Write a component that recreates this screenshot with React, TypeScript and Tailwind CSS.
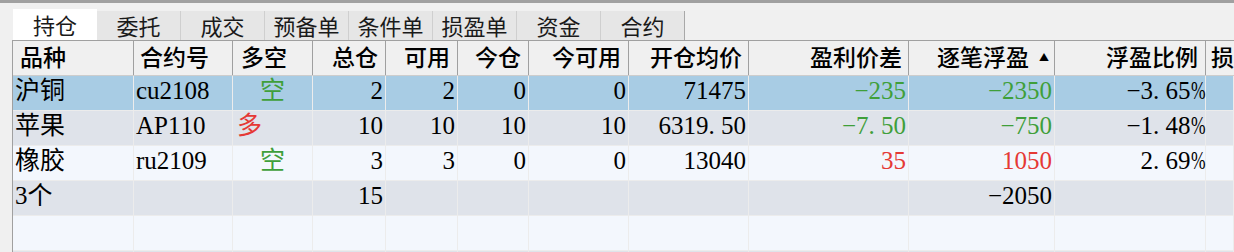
type Cell = { text?: string; color?: string; align?: 'left' | 'right' | 'center' }

const headers: { label: string; align: 'left' | 'right'; pad: string; sort?: boolean }[] = [
    { label: '品种', align: 'left', pad: 'pl-[7px]' },
    { label: '合约号', align: 'left', pad: 'pl-[6px]' },
    { label: '多空', align: 'left', pad: 'pl-[8px]' },
    { label: '总仓', align: 'right', pad: 'pr-[7px]' },
    { label: '可用', align: 'right', pad: 'pr-[7px]' },
    { label: '今仓', align: 'right', pad: 'pr-[7px]' },
    { label: '今可用', align: 'right', pad: 'pr-[7px]' },
    { label: '开仓均价', align: 'right', pad: 'pr-[6px]' },
    { label: '盈利价差', align: 'right', pad: 'pr-[6px]' },
    { label: '逐笔浮盈', align: 'right', pad: 'pr-[5px]', sort: true },
    { label: '浮盈比例', align: 'right', pad: 'pr-[7px]' },
    { label: '损', align: 'left', pad: 'pl-[5px]' },
]

const GREEN = 'text-[#3f9f3a]'
const RED = 'text-[#e53935]'

const empty = (): Cell[] => Array.from({ length: 12 }, () => ({}))

const rows: { bg: string; cells: Cell[] }[] = [
    {
        bg: 'bg-[#a8cce4]',
        cells: [
            { text: '沪铜' },
            { text: 'cu2108' },
            { text: '空', color: GREEN, align: 'center' },
            { text: '2', align: 'right' },
            { text: '2', align: 'right' },
            { text: '0', align: 'right' },
            { text: '0', align: 'right' },
            { text: '71475', align: 'right' },
            { text: '−235', align: 'right', color: GREEN },
            { text: '−2350', align: 'right', color: GREEN },
            { text: '−3.65%', align: 'right' },
            {},
        ],
    },
    {
        bg: 'bg-[#dfe3ea]',
        cells: [
            { text: '苹果' },
            { text: 'AP110' },
            { text: '多', color: RED },
            { text: '10', align: 'right' },
            { text: '10', align: 'right' },
            { text: '10', align: 'right' },
            { text: '10', align: 'right' },
            { text: '6319.50', align: 'right' },
            { text: '−7.50', align: 'right', color: GREEN },
            { text: '−750', align: 'right', color: GREEN },
            { text: '−1.48%', align: 'right' },
            {},
        ],
    },
    {
        bg: 'bg-[#f3f7fd]',
        cells: [
            { text: '橡胶' },
            { text: 'ru2109' },
            { text: '空', color: GREEN, align: 'center' },
            { text: '3', align: 'right' },
            { text: '3', align: 'right' },
            { text: '0', align: 'right' },
            { text: '0', align: 'right' },
            { text: '13040', align: 'right' },
            { text: '35', align: 'right', color: RED },
            { text: '1050', align: 'right', color: RED },
            { text: '2.69%', align: 'right' },
            {},
        ],
    },
    {
        bg: 'bg-[#dfe3ea]',
        cells: [
            { text: '3个' },
            {},
            {},
            { text: '15', align: 'right' },
            {},
            {},
            {},
            {},
            {},
            { text: '−2050', align: 'right' },
            {},
            {},
        ],
    },
    { bg: 'bg-[#f3f7fd]', cells: empty() },
    { bg: 'bg-[#dfe3ea]', cells: empty() },
]

const tabs = ['持仓', '委托', '成交', '预备单', '条件单', '损盈单', '资金', '合约']

const gridCols = 'grid grid-cols-[121px_99px_80px_73px_72px_71px_100px_120px_160px_146px_151px_1fr]'

// SimSun style: '.' and '%' take a half-width cell like the digits
const Num = ({ text }: { text: string }) => (
    <>
        {text.split('').map((ch, i) => {
            if (ch === '.') return <span key={i} className="inline-block w-[0.5em]">.</span>
            if (ch === '%')
                return (
                    <span key={i} className="inline-block w-[0.5em]">
                        <span className="inline-block origin-left scale-x-[0.7]">%</span>
                    </span>
                )
            return <span key={i}>{ch}</span>
        })}
    </>
)

const App = () => {
    return (
        <div className="h-[252px] w-[1234px] overflow-hidden bg-[#f0f0f0]">
            <div className="h-[3px] bg-[#a0a0a0]" />

            <div className="mt-[6px] flex h-[31px] items-end pl-[13px] font-['Noto_Sans_CJK_SC',sans-serif] text-[22px] leading-[1.2] text-[#1a1a1a]">
                {tabs.map((tab, i) =>
                    i === 0 ? (
                        <div key={tab} className="flex h-[31px] w-[84px] items-center justify-center bg-white pb-[1px]">
                            {tab}
                        </div>
                    ) : (
                        <div
                            key={tab}
                            className={`flex h-[29px] w-[84px] items-center justify-center border-r bg-[#e6e6e6] ${
                                i === tabs.length - 1 ? 'border-[#a8a8a8]' : 'border-[#cfcfcf]'
                            }`}
                        >
                            {tab}
                        </div>
                    )
                )}
            </div>

            <div className="ml-[12px] border-l border-t border-[#a0a0a0]">
                <div className={`${gridCols} h-[35px] border-b border-[#cdcdcd] bg-[#f0f0f0] font-['Noto_Sans_CJK_SC',sans-serif] text-[23px] font-medium leading-[1.2] text-black`}>
                    {headers.map((h) => (
                        <div
                            key={h.label}
                            className={`flex items-center whitespace-nowrap border-r border-[#a0a0a0] pb-[2px] ${h.pad} ${
                                h.align === 'right' ? 'justify-end' : 'justify-start'
                            }`}
                        >
                            <span>{h.label}</span>
                            {h.sort && <span className="ml-[10px] text-[10px] leading-none">▲</span>}
                        </div>
                    ))}
                </div>

                {rows.map((row, r) => (
                    <div
                        key={r}
                        className={`${gridCols} h-[35px] ${row.bg} font-['Liberation_Serif','Noto_Sans_CJK_SC',serif] text-[25px] leading-[1.2] text-black`}
                    >
                        {row.cells.map((cell, c) => (
                            <div
                                key={c}
                                className={`flex items-center whitespace-nowrap border-b border-r border-[#ececec] pb-[4px] ${
                                    cell.align === 'right'
                                        ? 'justify-end pr-[2px]'
                                        : cell.align === 'center'
                                          ? 'justify-center'
                                          : c === 2
                                            ? 'pl-[4px]'
                                            : 'pl-[2px]'
                                } ${cell.color ?? ''}`}
                            >
                                {cell.text && <Num text={cell.text} />}
                            </div>
                        ))}
                    </div>
                ))}
            </div>
        </div>
    )
}

export default App
